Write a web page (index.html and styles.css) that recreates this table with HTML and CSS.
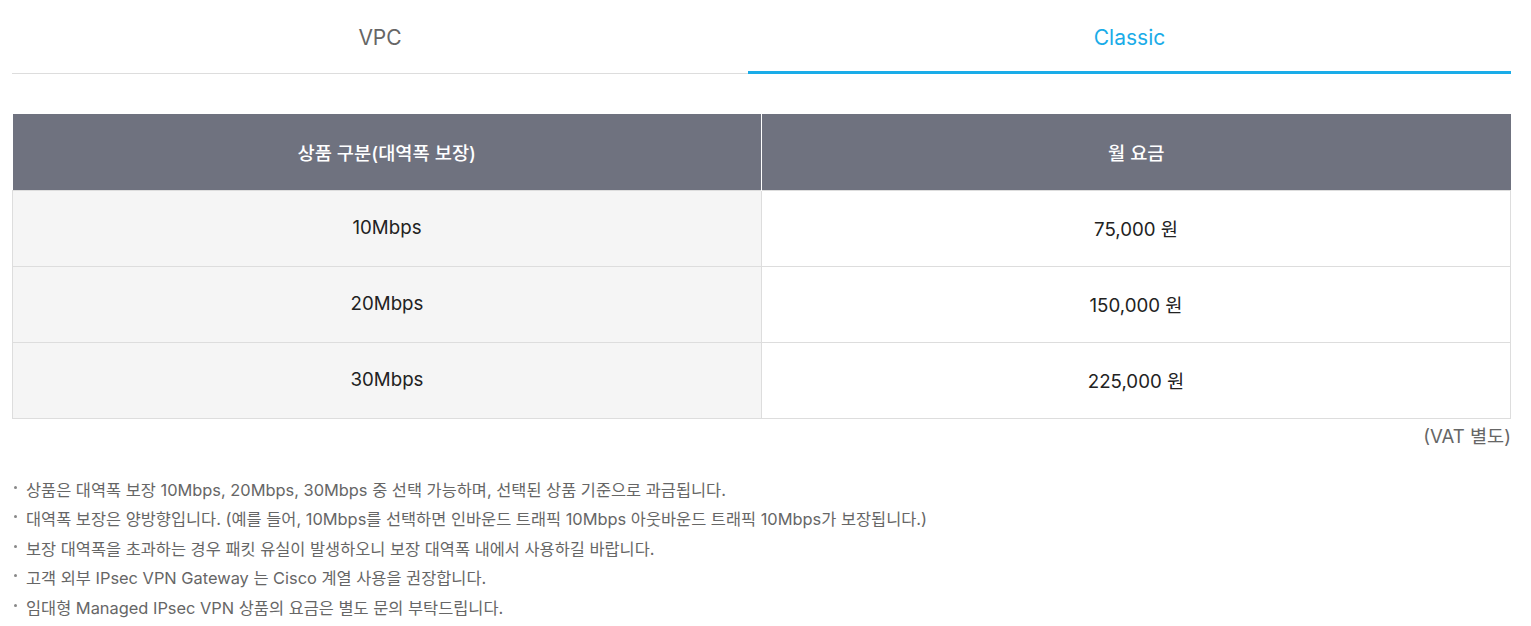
FILE: index.html
```html
<!DOCTYPE html>
<html lang="ko">
<head>
<meta charset="utf-8">
<link rel="stylesheet" href="styles.css">
</head>
<body>
<div class="wrap">
  <div class="tabs">
    <div class="tab first">VPC</div>
    <div class="tab active">Classic</div>
  </div>
  <table class="price">
    <thead>
      <tr><th>상품 구분(대역폭 보장)</th><th>월 요금</th></tr>
    </thead>
    <tbody>
      <tr><td class="name">10Mbps</td><td>75,000 원</td></tr>
      <tr><td class="name">20Mbps</td><td>150,000 원</td></tr>
      <tr><td class="name">30Mbps</td><td>225,000 원</td></tr>
    </tbody>
  </table>
  <p class="vat">(VAT 별도)</p>
  <ul class="notes">
    <li>상품은 대역폭 보장 10Mbps, 20Mbps, 30Mbps 중 선택 가능하며, 선택된 상품 기준으로 과금됩니다.</li>
    <li>대역폭 보장은 양방향입니다. (예를 들어, 10Mbps를 선택하면 인바운드 트래픽 10Mbps 아웃바운드 트래픽 10Mbps가 보장됩니다.)</li>
    <li>보장 대역폭을 초과하는 경우 패킷 유실이 발생하오니 보장 대역폭 내에서 사용하길 바랍니다.</li>
    <li>고객 외부 IPsec VPN Gateway 는 Cisco 계열 사용을 권장합니다.</li>
    <li>임대형 Managed IPsec VPN 상품의 요금은 별도 문의 부탁드립니다.</li>
  </ul>
</div>
</body>
</html>
```

FILE: styles.css
```css
* { box-sizing: border-box; }
body {
  margin: 0;
  font-family: Inter, "Noto Sans CJK KR", sans-serif;
  color: #222;
  background: #fff;
}
.wrap {
  padding: 0 20px 0 12px;
}
.tabs {
  display: flex;
  border-bottom: 1px solid #dddddd;
  height: 74px;
}
.tab {
  flex: 1;
  text-align: center;
  font-size: 21px;
  color: #666;
  padding-top: 25px;
  line-height: 26px;
}
.tab.first {
  flex: 0 0 736px;
}
.tab.active {
  color: #1aace8;
  border-bottom: 3px solid #1aace8;
  margin-bottom: -1px;
}
.price {
  width: 100%;
  margin-top: 40px;
  border-collapse: collapse;
  table-layout: fixed;
  font-size: 18.7px;
}
.price th {
  background: #6f727f;
  color: #fff;
  font-weight: 500;
  height: 76px;
  border-left: 1px solid #fff;
}
.price th:first-child { border-left: 0; }
.price td {
  height: 76px;
  text-align: center;
  border: 1px solid #dddddd;
  background: #fff;
  padding-bottom: 2px;
}
.price td.name { background: #f5f5f5; }
.vat {
  margin: 4px 0 0;
  text-align: right;
  font-size: 18.6px;
  color: #666;
  line-height: 26px;
}
.notes {
  list-style: none;
  margin: 27px 0 0;
  padding: 0;
  font-size: 16.4px;
  color: #666;
}
.notes li {
  position: relative;
  padding-left: 14px;
  line-height: 29.5px;
}
.notes li::before {
  content: "";
  position: absolute;
  left: 2px;
  top: 10px;
  width: 3px;
  height: 3px;
  background: #888;
  border-radius: 50%;
}
```
